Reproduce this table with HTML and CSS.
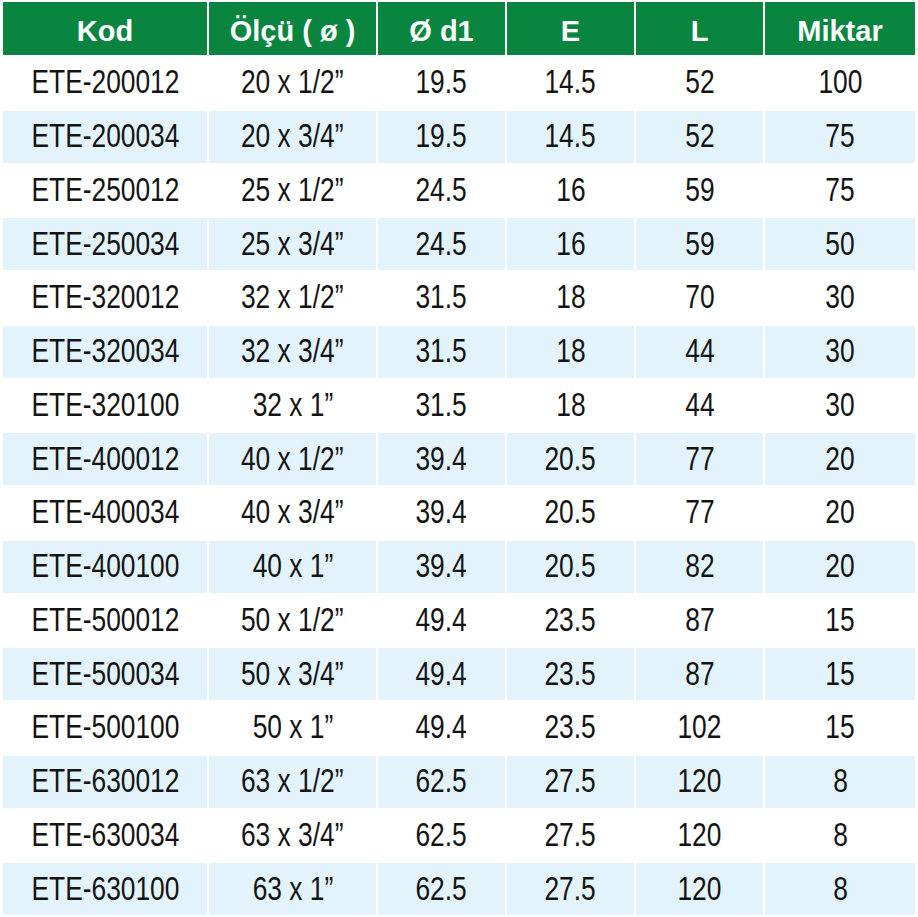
FILE: index.html
```html
<!DOCTYPE html>
<html lang="tr">
<head>
<meta charset="utf-8">
<link rel="stylesheet" href="styles.css">
</head>
<body>
<table class="spec">
<colgroup>
<col class="c-kod"><col class="c-olcu"><col class="c-n"><col class="c-n"><col class="c-n"><col class="c-mik">
</colgroup>
<thead>
<tr><th>Kod</th><th>Ölçü ( ø )</th><th>Ø d1</th><th>E</th><th>L</th><th>Miktar</th></tr>
</thead>
<tbody>
<tr><td><span>ETE-200012</span></td><td><span>20 x 1/2”</span></td><td><span>19.5</span></td><td><span>14.5</span></td><td><span>52</span></td><td><span>100</span></td></tr>
<tr><td><span>ETE-200034</span></td><td><span>20 x 3/4”</span></td><td><span>19.5</span></td><td><span>14.5</span></td><td><span>52</span></td><td><span>75</span></td></tr>
<tr><td><span>ETE-250012</span></td><td><span>25 x 1/2”</span></td><td><span>24.5</span></td><td><span>16</span></td><td><span>59</span></td><td><span>75</span></td></tr>
<tr><td><span>ETE-250034</span></td><td><span>25 x 3/4”</span></td><td><span>24.5</span></td><td><span>16</span></td><td><span>59</span></td><td><span>50</span></td></tr>
<tr><td><span>ETE-320012</span></td><td><span>32 x 1/2”</span></td><td><span>31.5</span></td><td><span>18</span></td><td><span>70</span></td><td><span>30</span></td></tr>
<tr><td><span>ETE-320034</span></td><td><span>32 x 3/4”</span></td><td><span>31.5</span></td><td><span>18</span></td><td><span>44</span></td><td><span>30</span></td></tr>
<tr><td><span>ETE-320100</span></td><td><span>32 x 1”</span></td><td><span>31.5</span></td><td><span>18</span></td><td><span>44</span></td><td><span>30</span></td></tr>
<tr><td><span>ETE-400012</span></td><td><span>40 x 1/2”</span></td><td><span>39.4</span></td><td><span>20.5</span></td><td><span>77</span></td><td><span>20</span></td></tr>
<tr><td><span>ETE-400034</span></td><td><span>40 x 3/4”</span></td><td><span>39.4</span></td><td><span>20.5</span></td><td><span>77</span></td><td><span>20</span></td></tr>
<tr><td><span>ETE-400100</span></td><td><span>40 x 1”</span></td><td><span>39.4</span></td><td><span>20.5</span></td><td><span>82</span></td><td><span>20</span></td></tr>
<tr><td><span>ETE-500012</span></td><td><span>50 x 1/2”</span></td><td><span>49.4</span></td><td><span>23.5</span></td><td><span>87</span></td><td><span>15</span></td></tr>
<tr><td><span>ETE-500034</span></td><td><span>50 x 3/4”</span></td><td><span>49.4</span></td><td><span>23.5</span></td><td><span>87</span></td><td><span>15</span></td></tr>
<tr><td><span>ETE-500100</span></td><td><span>50 x 1”</span></td><td><span>49.4</span></td><td><span>23.5</span></td><td><span>102</span></td><td><span>15</span></td></tr>
<tr><td><span>ETE-630012</span></td><td><span>63 x 1/2”</span></td><td><span>62.5</span></td><td><span>27.5</span></td><td><span>120</span></td><td><span>8</span></td></tr>
<tr><td><span>ETE-630034</span></td><td><span>63 x 3/4”</span></td><td><span>62.5</span></td><td><span>27.5</span></td><td><span>120</span></td><td><span>8</span></td></tr>
<tr><td><span>ETE-630100</span></td><td><span>63 x 1”</span></td><td><span>62.5</span></td><td><span>27.5</span></td><td><span>120</span></td><td><span>8</span></td></tr>
</tbody>
</table>
</body>
</html>
```

FILE: styles.css
```css
html, body {
  margin: 0;
  padding: 0;
  background: #ffffff;
}

.spec {
  table-layout: fixed;
  border-collapse: separate;
  border-spacing: 2px;
  margin: 0 0 0 1px;
  width: 916px;
}

.c-kod { width: 204px; }
.c-olcu { width: 167px; }
.c-n { width: 127px; }
.c-mik { width: 150px; }

.spec th {
  background: #0a8540;
  color: #ffffff;
  font-family: "Liberation Sans", Arial, sans-serif;
  font-weight: bold;
  font-size: 29px;
  height: 53px;
  padding: 6px 0 0 0;
  box-sizing: border-box;
  text-align: center;
  vertical-align: middle;
}

.spec td {
  font-family: "Liberation Sans", Arial, sans-serif;
  font-size: 34px;
  color: #141414;
  text-align: center;
  vertical-align: middle;
  height: 51.75px;
  padding: 0 0 3px 0;
  box-sizing: border-box;
  line-height: 1;
  white-space: nowrap;
}

.spec td span {
  display: inline-block;
  transform: scaleX(0.775);
}

.spec tbody tr:nth-child(even) td {
  background: #e3f3fb;
}
```
